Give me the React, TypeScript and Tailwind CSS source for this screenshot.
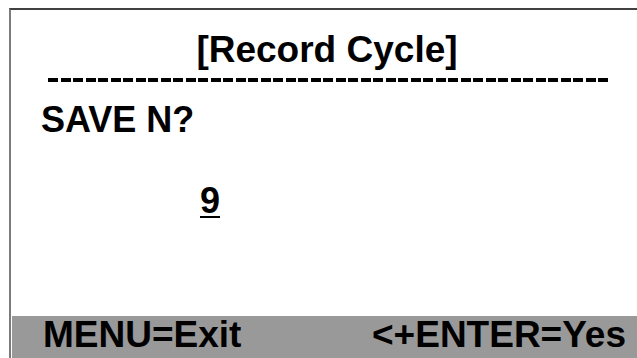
export default function App() {
  const dashes = Array.from({ length: 45 }, (_, i) => i)

  return (
    <div className="w-[637px] h-[358px] bg-white overflow-hidden pt-[8px] pl-[9px] font-['Liberation_Sans',Arial,sans-serif] font-bold text-black text-[36px] leading-[36px]">
      <div className="h-full flex flex-col border-t-2 border-l-2 border-t-[#404040] border-l-[#7c7c7c]">
        {/* Header */}
        <div className="mt-[22px] pl-[6px] text-center text-[37px] whitespace-nowrap">[Record Cycle]</div>
        <div className="mt-[10px] ml-[37px] flex gap-[2.5px]">
          {dashes.map((i) => (
            <div key={i} className="w-[10px] h-[4px] bg-black" />
          ))}
        </div>

        {/* Prompt */}
        <div className="mt-[20px] ml-[30px] whitespace-nowrap">SAVE N?</div>
        <div className="mt-[45px] ml-[189px]">
          <span className="underline decoration-[2px] underline-offset-[3px]">9</span>
        </div>

        {/* Soft keys */}
        <div className="mt-auto ml-px h-[42px] bg-[#999999] flex justify-between pt-px pl-[31px] pr-[11px] text-[37px] whitespace-nowrap">
          <span>MENU=Exit</span>
          <span>&lt;+ENTER=Yes</span>
        </div>
      </div>
    </div>
  )
}
